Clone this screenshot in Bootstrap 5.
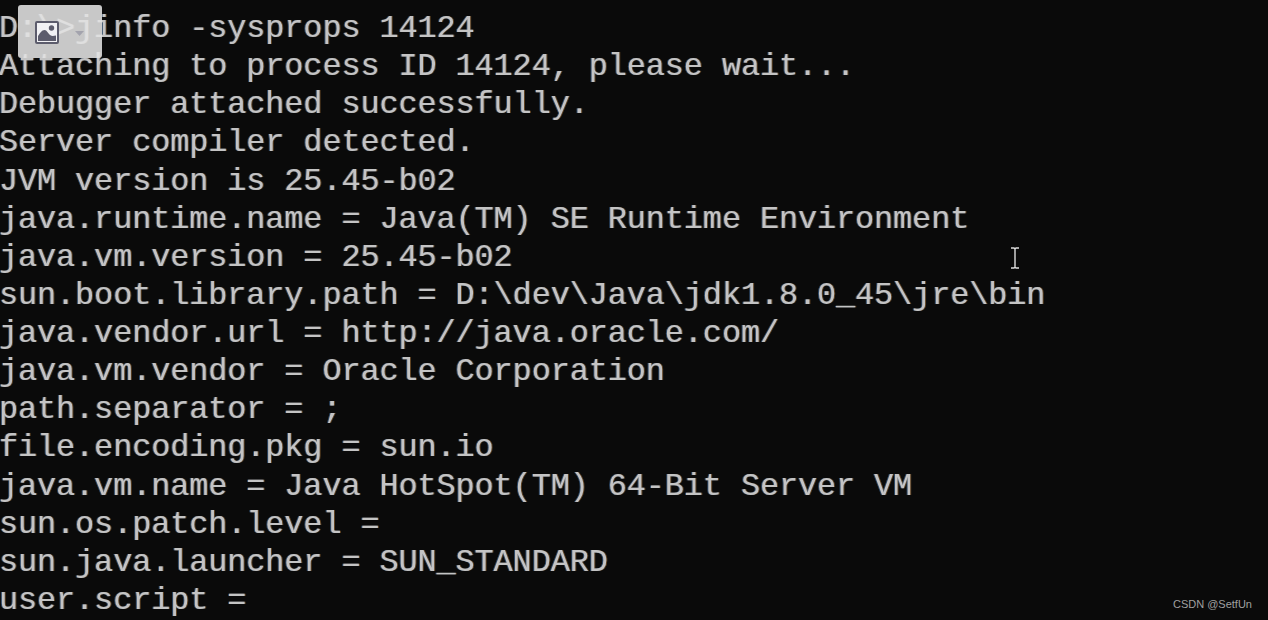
<!DOCTYPE html>
<html lang="en"><head><meta charset="utf-8">
<link href="https://cdn.jsdelivr.net/npm/bootstrap@5.3.0/dist/css/bootstrap.min.css" rel="stylesheet">
<style>
html,body{height:620px;overflow:hidden;background:#0a0a0a}
.term-screen{height:620px;background:#0a0a0a;color:#c4c4c4;overflow:hidden;position:relative;padding-top:10px}
.term-line{font-family:"Liberation Mono","DejaVu Sans Mono",monospace;font-size:32px;line-height:38.13px;height:38.13px;white-space:pre;letter-spacing:-.18px;filter:blur(.55px);text-shadow:-1px 0 rgba(90,150,220,.45),1px 0 rgba(220,150,70,.4);margin-left:-1px}
.img-chip{position:absolute;left:18px;top:5px;width:84px;height:53px;background:rgba(226,226,226,.88);border-radius:3px}
.mark-wm{position:absolute;right:16px;top:598px;font:11px "Liberation Sans",sans-serif;color:#a0a0a0}
.ibeam{position:absolute;left:1009px;top:247px}
.chip-icon{margin-left:17px;margin-top:1px}
.chip-caret{margin-left:16px;margin-top:3px}
</style></head><body>
<div class="term-screen">
<div class="term-line">D:\&gt;jinfo -sysprops 14124</div>
<div class="term-line">Attaching to process ID 14124, please wait...</div>
<div class="term-line">Debugger attached successfully.</div>
<div class="term-line">Server compiler detected.</div>
<div class="term-line">JVM version is 25.45-b02</div>
<div class="term-line">java.runtime.name = Java(TM) SE Runtime Environment</div>
<div class="term-line">java.vm.version = 25.45-b02</div>
<div class="term-line">sun.boot.library.path = D:\dev\Java\jdk1.8.0_45\jre\bin</div>
<div class="term-line">java.vendor.url = http://java.oracle.com/</div>
<div class="term-line">java.vm.vendor = Oracle Corporation</div>
<div class="term-line">path.separator = ;</div>
<div class="term-line">file.encoding.pkg = sun.io</div>
<div class="term-line">java.vm.name = Java HotSpot(TM) 64-Bit Server VM</div>
<div class="term-line">sun.os.patch.level =</div>
<div class="term-line">sun.java.launcher = SUN_STANDARD</div>
<div class="term-line">user.script =</div>
<div class="img-chip d-flex align-items-center">
<svg class="chip-icon" width="24" height="23" viewBox="0 0 24 23"><rect x="1" y="1" width="22" height="21" rx="1" fill="#f1f1f4" stroke="#5c5c6c" stroke-width="2"/><path d="M3 20v-5c2-3 4-6 6.500-6s3.500 3.500 5.500 5 3.500 1 6 .5V20z" fill="#5c5c6c"/><circle cx="16.500" cy="7" r="2.700" fill="#5c5c6c"/></svg>
<svg class="chip-caret" width="9" height="5" viewBox="0 0 9 5"><path d="M0 0h9L4.500 5z" fill="#a3a3ad"/></svg>
</div>
<svg class="ibeam" width="12" height="22" viewBox="0 0 12 22"><path d="M2 1h3l1 1 1-1h3M6 2v18M2 21h3l1-1 1 1h3" fill="none" stroke="#ddd" stroke-width="1.4"/></svg>
<div class="mark-wm">CSDN @SetfUn</div>
</div>
<script src="https://cdn.jsdelivr.net/npm/bootstrap@5.3.0/dist/js/bootstrap.bundle.min.js"></script>
</body></html>
